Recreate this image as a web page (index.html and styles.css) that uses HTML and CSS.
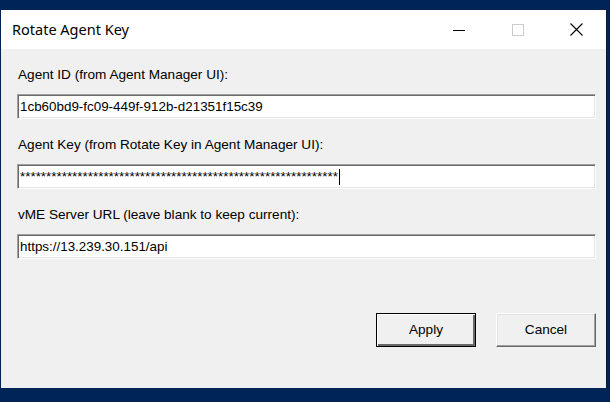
FILE: index.html
```html
<!DOCTYPE html>
<html lang="en">
<head>
  <meta charset="UTF-8">
  <meta name="viewport" content="width=device-width, initial-scale=1.0">
  <title>Rotate Agent Key</title>
  <link rel="stylesheet" href="styles.css">
</head>
<body>
  <div class="window">
    <div class="titlebar">
      <span class="title">Rotate Agent Key</span>
      <div class="controls">
        <span class="ctrl">
          <svg width="12" height="12" viewBox="0 0 12 12"><path d="M0 6.5h12" stroke="#000" stroke-width="1"/></svg>
        </span>
        <span class="ctrl">
          <svg width="12" height="12" viewBox="0 0 12 12"><rect x="0.5" y="0.5" width="11" height="11" fill="none" stroke="#cccccc" stroke-width="1"/></svg>
        </span>
        <span class="ctrl">
          <svg width="13" height="13" viewBox="0 0 13 13"><path d="M0.5 0.5l12 12M12.5 0.5l-12 12" stroke="#000" stroke-width="1.1"/></svg>
        </span>
      </div>
    </div>

    <div class="content">
      <div class="field">
        <label class="label">Agent ID (from Agent Manager UI):</label>
        <div class="textbox">1cb60bd9-fc09-449f-912b-d21351f15c39</div>
      </div>

      <div class="field">
        <label class="label">Agent Key (from Rotate Key in Agent Manager UI):</label>
        <div class="textbox password"><span class="stars">*************************************************************</span><span class="caret"></span></div>
      </div>

      <div class="field">
        <label class="label">vME Server URL (leave blank to keep current):</label>
        <div class="textbox">https://13.239.30.151/api</div>
      </div>

      <div class="buttons">
        <button class="button default">Apply</button>
        <button class="button">Cancel</button>
      </div>
    </div>
  </div>
</body>
</html>
```

FILE: styles.css
```css
body {
  margin: 0;
  background-color: #012456;
  font-family: 'Liberation Sans', Arial, sans-serif;
  color: #000;
}
.window {
  margin: 10px 0 0 1px;
  width: 605px;
  height: 378px;
  background-color: #f0f0f0;
  display: flex;
  flex-direction: column;
  box-shadow: 1px 1px 0 #011d45;
}
.titlebar {
  height: 39px;
  background-color: #fff;
  display: flex;
  align-items: center;
  padding-left: 11px;
}
.title {
  font-family: 'Noto Sans', sans-serif;
  font-size: 14.5px;
  padding-bottom: 1px;
}
.controls {
  margin-left: auto;
  display: flex;
  height: 100%;
}
.ctrl {
  width: 59px;
  display: flex;
  align-items: center;
  justify-content: center;
}
.content {
  padding: 18px 10px 0 16px;
  display: flex;
  flex-direction: column;
}
.field {
  display: flex;
  flex-direction: column;
  margin-bottom: 18px;
}
.label {
  font-size: 13.6px;
  line-height: 16px;
  padding-left: 1px;
  margin-bottom: 11px;
}
.textbox {
  box-sizing: border-box;
  height: 25px;
  background-color: #fff;
  border: 1px solid;
  border-color: #a0a0a0 #fff #fff #a0a0a0;
  box-shadow: inset 1px 1px 0 #696969, inset -1px -1px 0 #e3e3e3;
  padding: 0 0 0 2px;
  font-size: 13.4px;
  line-height: 23px;
  white-space: nowrap;
  display: flex;
  align-items: center;
}
.caret {
  width: 1px;
  height: 16px;
  background-color: #000;
  margin-left: 1px;
}
.buttons {
  display: flex;
  justify-content: flex-end;
  gap: 20px;
  margin-top: 36px;
}
.button {
  box-sizing: border-box;
  width: 100px;
  height: 34px;
  background-color: #f0f0f0;
  font-family: 'Liberation Sans', Arial, sans-serif;
  font-size: 13.6px;
  color: #000;
  border: 1px solid;
  border-color: #fff #696969 #696969 #fff;
  box-shadow: inset -1px -1px 0 #a0a0a0, inset 1px 1px 0 #e3e3e3;
  padding: 0 0 2px;
}
.button.default {
  border: 1px solid #000;
  box-shadow: inset 1px 1px 0 #fff, inset -2px -2px 0 #696969;
}
```
